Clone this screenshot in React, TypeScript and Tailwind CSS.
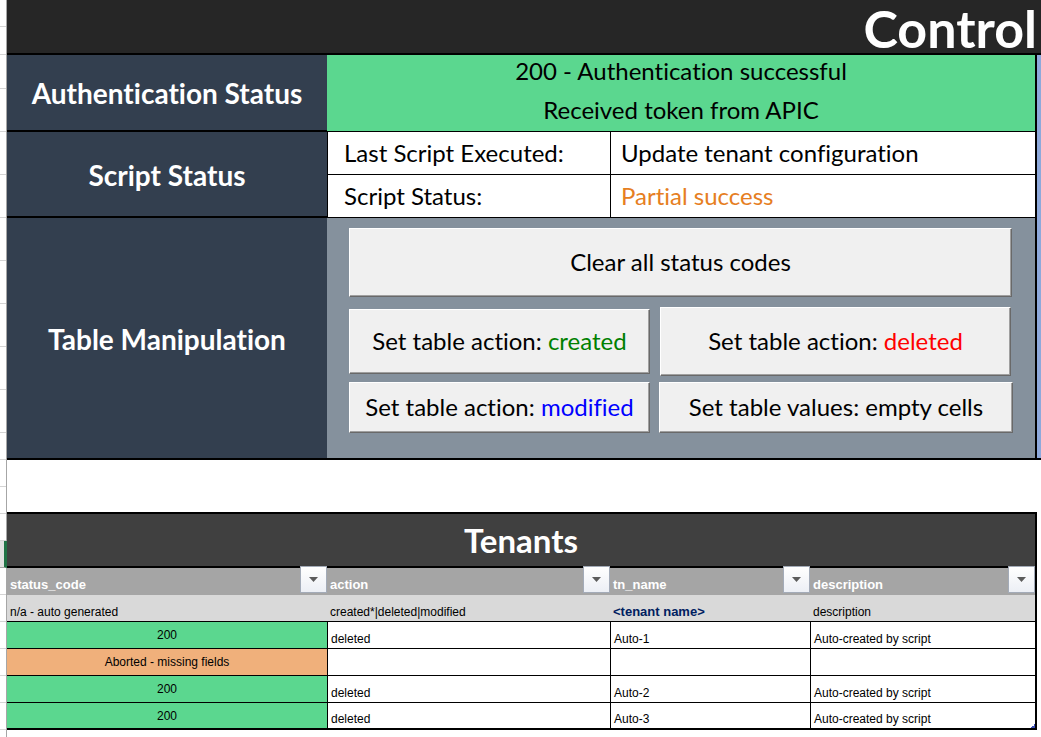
import { ReactNode } from "react";

const gutter = [
  "h-[27px]", "h-[28px]", "h-[34px]", "h-[43px]", "h-[43px]", "h-[43px]", "h-[43px]", "h-[43px]",
  "h-[43px]", "h-[43px]", "h-[43px]", "h-[27px]", "h-[27px]", "h-[27px]", "h-[27px]", "active",
  "h-[27px]", "h-[27px]", "h-[27px]", "h-[27px]", "h-[27px]", "h-[27px]",
];

function RowHeaders() {
  return (
    <div className="w-[7px] shrink-0 border-r border-[#a6a6a6]" aria-hidden="true">
      {gutter.map((h, i) =>
        h === "active" ? (
          <div key={i} className="-mr-px h-[27px] border-r-3 border-b border-r-[#217346] border-b-[#a6a6a6] bg-[#e1e1e1]" />
        ) : (
          <div key={i} className={`${h} border-b border-[#d4d4d4]`} />
        )
      )}
    </div>
  );
}

function PanelLabel({ children, className }: { children: ReactNode; className: string }) {
  return (
    <h2 className={`flex items-center justify-center border-black bg-[#333f4f] pt-px text-[28px] leading-8 font-bold text-white ${className}`}>
      {children}
    </h2>
  );
}

function PanelButton({ children, className }: { children: ReactNode; className: string }) {
  return (
    <button
      type="button"
      className={`border border-t-white border-l-white border-r-[#696969] border-b-[#696969] bg-[#f0f0f0] pb-0.5 text-center whitespace-nowrap shadow-[inset_-1px_-1px_0_#a0a0a0] ${className}`}
    >
      {children}
    </button>
  );
}

function FilterButton({ label }: { label: string }) {
  return (
    <button
      type="button"
      aria-label={`Filter ${label}`}
      className="absolute -top-0.5 right-0 flex size-[27px] items-center justify-center border border-[#a3abb8] bg-linear-to-b from-white to-[#eceff5]"
    >
      <svg width="9" height="5" viewBox="0 0 9 5">
        <path d="M0 0h9L4.5 5z" fill="#5c5c5c" />
      </svg>
    </button>
  );
}

const rows = [
  { status: "200", ok: true, action: "deleted", name: "Auto-1", description: "Auto-created by script" },
  { status: "Aborted - missing fields", ok: false, action: "", name: "", description: "" },
  { status: "200", ok: true, action: "deleted", name: "Auto-2", description: "Auto-created by script" },
  { status: "200", ok: true, action: "deleted", name: "Auto-3", description: "Auto-created by script" },
];

const columns = ["status_code", "action", "tn_name", "description"];

export default function App() {
  return (
    <div className="flex min-h-screen bg-white font-[Lato,sans-serif] text-black [font-variant-ligatures:none]">
      <RowHeaders />
      <main className="min-w-0 flex-1">
        <header className="border-b-2 border-black bg-[#262626] pt-1 pr-1 text-right">
          <h1 className="text-[52px] leading-[49px] font-bold text-white">Control</h1>
        </header>

        <div className="flex border-b-2 border-black text-[24px] leading-7">
          <section className="grid flex-1 grid-cols-[320px_1fr] border-r-2 border-black">
            <PanelLabel className="h-[77px] border-b-2">Authentication Status</PanelLabel>
            <div className="border-b border-black bg-[#5bd78f] text-center leading-[39px]">
              <p className="-mt-1">200 - Authentication successful</p>
              <p>Received token from APIC</p>
            </div>

            <PanelLabel className="h-[86px] border-b-2">Script Status</PanelLabel>
            <dl className="grid grid-cols-[283px_1fr] grid-rows-2 border-l border-black">
              <dt className="flex items-center border-r border-b border-black pl-4">Last Script Executed:</dt>
              <dd className="flex items-center border-b border-black pl-2.5">Update tenant configuration</dd>
              <dt className="flex items-center border-r border-b border-black pl-4">Script Status:</dt>
              <dd className="flex items-center border-b border-black pl-2.5 text-[#e67e22]">Partial success</dd>
            </dl>

            <PanelLabel className="h-[240px]">Table Manipulation</PanelLabel>
            <div className="flex flex-col bg-[#85919d] px-[22px] pt-2.5">
              <PanelButton className="mr-px h-[69px]">Clear all status codes</PanelButton>
              <div className="mt-2.5 mr-0.5 flex items-center gap-2.5">
                <PanelButton className="h-[65px] w-[301px]">
                  Set table action: <span className="text-[#008000]">created</span>
                </PanelButton>
                <PanelButton className="h-[69px] flex-1">
                  Set table action: <span className="text-[#ff0000]">deleted</span>
                </PanelButton>
              </div>
              <div className="mt-1.5 flex gap-[9px]">
                <PanelButton className="h-[51px] w-[301px]">
                  Set table action: <span className="text-[#0000ff]">modified</span>
                </PanelButton>
                <PanelButton className="h-[51px] flex-1">Set table values: empty cells</PanelButton>
              </div>
            </div>
          </section>
          <div className="w-1 bg-[#8ea9db]" />
        </div>

        <section className="relative mt-[52px] mr-1 border-y-2 border-r-2 border-black">
          <h2 className="h-[54px] border-b-2 border-black bg-[#404040] text-center text-[33px] leading-[52px] font-bold text-white">
            Tenants
          </h2>
          <table className="w-full table-fixed border-separate border-spacing-0 font-['Liberation_Sans',sans-serif] text-[12px] leading-3.5">
            <colgroup>
              <col className="w-[320px]" />
              <col className="w-[283px]" />
              <col className="w-[200px]" />
              <col />
            </colgroup>
            <thead>
              <tr className="h-[27px] bg-[#a5a5a5] text-left align-bottom text-[13px] text-white">
                {columns.map((c) => (
                  <th key={c} className="relative px-[3px] pb-[3px] font-bold">
                    {c}
                    <FilterButton label={c} />
                  </th>
                ))}
              </tr>
            </thead>
            <tbody>
              <tr className="h-[27px] bg-[#d9d9d9] align-bottom">
                <td className="border-b border-black px-[3px] pb-0.5">n/a - auto generated</td>
                <td className="border-b border-black px-[3px] pb-0.5">created*|deleted|modified</td>
                <td className="border-b border-black px-[3px] pb-0.5 text-[13px] font-bold text-[#002060]">&lt;tenant name&gt;</td>
                <td className="border-b border-black px-[3px] pb-0.5">description</td>
              </tr>
              {rows.map((r, i) => (
                <tr key={i} className="group h-[27px] align-bottom last:h-[25px]">
                  <td className={`border-b border-black text-center align-middle group-last:border-b-0 ${r.ok ? "bg-[#5bd78f]" : "bg-[#f0b07b]"}`}>
                    {r.status}
                  </td>
                  <td className="border-b border-l border-black px-[3px] pb-0.5 group-last:border-b-0">{r.action}</td>
                  <td className="border-b border-l border-black px-[3px] pb-0.5 group-last:border-b-0">{r.name}</td>
                  <td className="border-b border-l border-black px-[3px] pb-0.5 group-last:border-b-0">{r.description}</td>
                </tr>
              ))}
            </tbody>
          </table>
          <svg className="absolute right-0 bottom-0" width="4" height="4" viewBox="0 0 4 4">
            <path d="M3 0h1v4H0V3h1V2h2z" fill="#3f51b5" />
          </svg>
        </section>
      </main>
    </div>
  );
}
